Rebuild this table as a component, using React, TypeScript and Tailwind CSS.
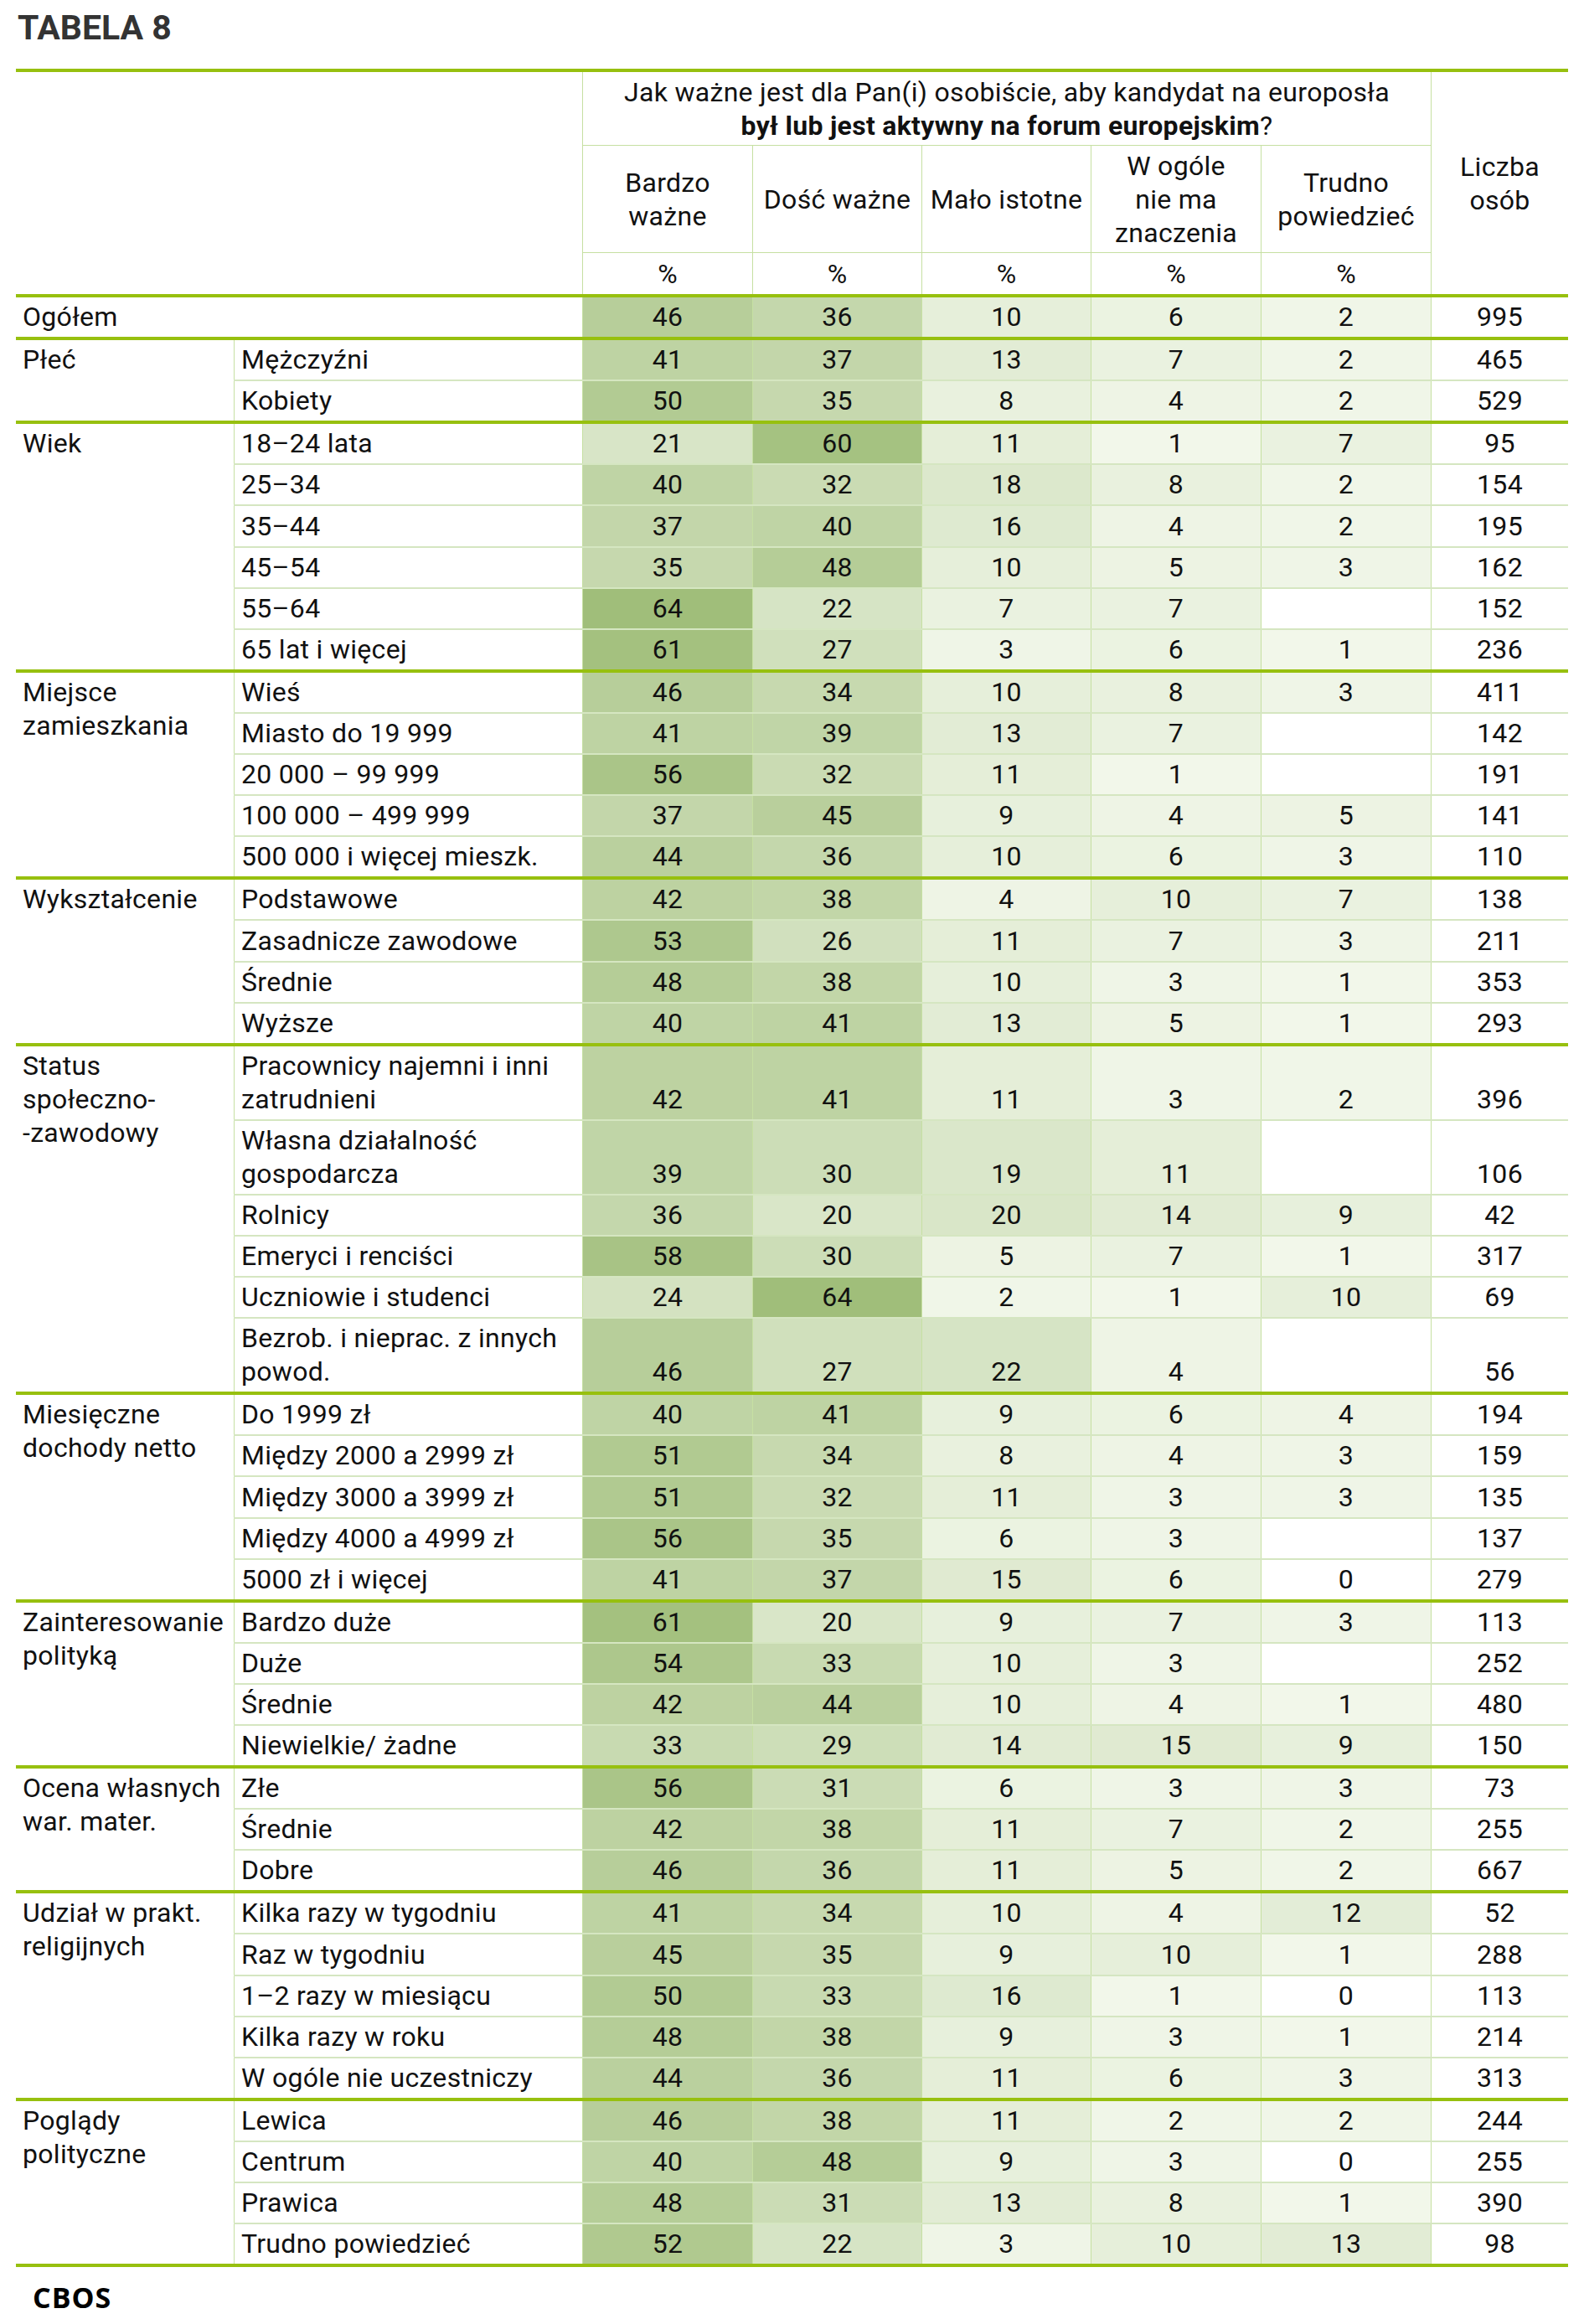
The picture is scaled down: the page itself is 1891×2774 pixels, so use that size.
type Row = { label: string; v: (number | null)[]; n: number };
type Group = { label: string; rows: Row[] };

const total: Row = { label: "Ogółem", v: [46, 36, 10, 6, 2], n: 995 };

const groups: Group[] = [
  {
    label: "Płeć",
    rows: [
      { label: "Mężczyźni", v: [41, 37, 13, 7, 2], n: 465 },
      { label: "Kobiety", v: [50, 35, 8, 4, 2], n: 529 },
    ],
  },
  {
    label: "Wiek",
    rows: [
      { label: "18–24 lata", v: [21, 60, 11, 1, 7], n: 95 },
      { label: "25–34", v: [40, 32, 18, 8, 2], n: 154 },
      { label: "35–44", v: [37, 40, 16, 4, 2], n: 195 },
      { label: "45–54", v: [35, 48, 10, 5, 3], n: 162 },
      { label: "55–64", v: [64, 22, 7, 7, null], n: 152 },
      { label: "65 lat i więcej", v: [61, 27, 3, 6, 1], n: 236 },
    ],
  },
  {
    label: "Miejsce\nzamieszkania",
    rows: [
      { label: "Wieś", v: [46, 34, 10, 8, 3], n: 411 },
      { label: "Miasto do 19 999", v: [41, 39, 13, 7, null], n: 142 },
      { label: "20 000 – 99 999", v: [56, 32, 11, 1, null], n: 191 },
      { label: "100 000 – 499 999", v: [37, 45, 9, 4, 5], n: 141 },
      { label: "500 000 i więcej mieszk.", v: [44, 36, 10, 6, 3], n: 110 },
    ],
  },
  {
    label: "Wykształcenie",
    rows: [
      { label: "Podstawowe", v: [42, 38, 4, 10, 7], n: 138 },
      { label: "Zasadnicze zawodowe", v: [53, 26, 11, 7, 3], n: 211 },
      { label: "Średnie", v: [48, 38, 10, 3, 1], n: 353 },
      { label: "Wyższe", v: [40, 41, 13, 5, 1], n: 293 },
    ],
  },
  {
    label: "Status\nspołeczno-\n-zawodowy",
    rows: [
      { label: "Pracownicy najemni i inni\nzatrudnieni", v: [42, 41, 11, 3, 2], n: 396 },
      { label: "Własna działalność\ngospodarcza", v: [39, 30, 19, 11, null], n: 106 },
      { label: "Rolnicy", v: [36, 20, 20, 14, 9], n: 42 },
      { label: "Emeryci i renciści", v: [58, 30, 5, 7, 1], n: 317 },
      { label: "Uczniowie i studenci", v: [24, 64, 2, 1, 10], n: 69 },
      { label: "Bezrob. i nieprac. z innych\npowod.", v: [46, 27, 22, 4, null], n: 56 },
    ],
  },
  {
    label: "Miesięczne\ndochody netto",
    rows: [
      { label: "Do 1999 zł", v: [40, 41, 9, 6, 4], n: 194 },
      { label: "Między 2000 a 2999 zł", v: [51, 34, 8, 4, 3], n: 159 },
      { label: "Między 3000 a 3999 zł", v: [51, 32, 11, 3, 3], n: 135 },
      { label: "Między 4000 a 4999 zł", v: [56, 35, 6, 3, null], n: 137 },
      { label: "5000 zł i więcej", v: [41, 37, 15, 6, 0], n: 279 },
    ],
  },
  {
    label: "Zainteresowanie\npolityką",
    rows: [
      { label: "Bardzo duże", v: [61, 20, 9, 7, 3], n: 113 },
      { label: "Duże", v: [54, 33, 10, 3, null], n: 252 },
      { label: "Średnie", v: [42, 44, 10, 4, 1], n: 480 },
      { label: "Niewielkie/ żadne", v: [33, 29, 14, 15, 9], n: 150 },
    ],
  },
  {
    label: "Ocena własnych\nwar. mater.",
    rows: [
      { label: "Złe", v: [56, 31, 6, 3, 3], n: 73 },
      { label: "Średnie", v: [42, 38, 11, 7, 2], n: 255 },
      { label: "Dobre", v: [46, 36, 11, 5, 2], n: 667 },
    ],
  },
  {
    label: "Udział w prakt.\nreligijnych",
    rows: [
      { label: "Kilka razy w tygodniu", v: [41, 34, 10, 4, 12], n: 52 },
      { label: "Raz w tygodniu", v: [45, 35, 9, 10, 1], n: 288 },
      { label: "1–2 razy w miesiącu", v: [50, 33, 16, 1, 0], n: 113 },
      { label: "Kilka razy w roku", v: [48, 38, 9, 3, 1], n: 214 },
      { label: "W ogóle nie uczestniczy", v: [44, 36, 11, 6, 3], n: 313 },
    ],
  },
  {
    label: "Poglądy\npolityczne",
    rows: [
      { label: "Lewica", v: [46, 38, 11, 2, 2], n: 244 },
      { label: "Centrum", v: [40, 48, 9, 3, 0], n: 255 },
      { label: "Prawica", v: [48, 31, 13, 8, 1], n: 390 },
      { label: "Trudno powiedzieć", v: [52, 22, 3, 10, 13], n: 98 },
    ],
  },
];

const COLS = ["w-[203px]", "w-[202px]", "w-[202px]", "w-[203px]", "w-[203px]"];
const HEADS = ["Bardzo\nważne", "Dość ważne", "Mało istotne", "W ogóle\nnie ma\nznaczenia", "Trudno\npowiedzieć"];

// heat-map shade, light green at 1% up to dark green at 64%
function heat(v: number | null) {
  if (!v) return "#ffffff";
  const t = Math.min(v, 64) / 64;
  const mix = (a: number, b: number) => Math.round(a + (b - a) * t);
  return `rgb(${mix(243, 160)}, ${mix(248, 190)}, ${mix(236, 122)})`;
}

function DataCells({ row, tall }: { row: Row; tall: boolean }) {
  const h = tall ? "h-[87.1px]" : "h-[47.1px]";
  return (
    <>
      {row.v.map((x, i) => (
        <div
          key={i}
          className={`${COLS[i]} ${h} shrink-0 border-l border-[#c6e0a2] flex items-end justify-center pb-[4px]`}
          style={{ backgroundColor: heat(x) }}
        >
          {x ?? ""}
        </div>
      ))}
      <div className={`w-[164px] ${h} shrink-0 border-l border-[#c6e0a2] flex items-end justify-center pb-[4px]`}>
        {row.n}
      </div>
    </>
  );
}

function Header() {
  return (
    <div className="flex border-t-4 border-[#97c00f]">
      <div className="w-[676px] shrink-0" />
      <div className="w-[1013px] shrink-0 flex flex-col">
        <div className="h-[88px] border-l border-b border-[#c6e0a2] flex flex-col items-center justify-center text-center">
          <div>Jak ważne jest dla Pan(i) osobiście, aby kandydat na europosła</div>
          <div>
            <span className="font-bold">był lub jest aktywny na forum europejskim</span>?
          </div>
        </div>
        <div className="h-[128px] flex border-b border-[#c6e0a2]">
          {HEADS.map((t, i) => (
            <div
              key={i}
              className={`${COLS[i]} shrink-0 border-l border-[#c6e0a2] flex items-center justify-center text-center whitespace-pre-line`}
            >
              {t}
            </div>
          ))}
        </div>
        <div className="h-[49px] flex">
          {COLS.map((c, i) => (
            <div key={i} className={`${c} shrink-0 border-l border-[#c6e0a2] flex items-center justify-center`}>
              %
            </div>
          ))}
        </div>
      </div>
      <div className="w-[164px] shrink-0 border-l border-[#c6e0a2] flex items-center justify-center text-center">
        Liczba
        <br />
        osób
      </div>
    </div>
  );
}

export default function App() {
  return (
    <div className="min-h-[2774px] w-[1891px] bg-white px-[19px] text-[32px] leading-[40px] tracking-[0.3px] text-[#111] font-['Roboto',sans-serif]">
      <div className="pt-[9px] pb-[25px] pl-[2px] text-[41px] leading-[48px] tracking-normal font-bold text-[#333]">
        TABELA 8
      </div>

      <div className="w-[1853px]">
        <Header />

        <div className="flex border-t-4 border-[#97c00f]">
          <div className="w-[676px] h-[47.1px] shrink-0 pl-[8px] flex items-end pb-[4px]">{total.label}</div>
          <DataCells row={total} tall={false} />
        </div>

        {groups.map((g) => (
          <div key={g.label} className="flex border-t-4 border-[#97c00f]">
            <div className="w-[260px] shrink-0 pl-[8px] pt-[3px] whitespace-pre-line">{g.label}</div>
            <div className="flex flex-col">
              {g.rows.map((r, i) => {
                const tall = r.label.includes("\n");
                return (
                  <div key={r.label + i} className={i > 0 ? "flex border-t-2 border-[#d5e6c1]" : "flex"}>
                    <div
                      className={`w-[416px] ${tall ? "h-[87.1px]" : "h-[47.1px]"} shrink-0 border-l border-[#c6e0a2] pl-[8px] pb-[4px] flex items-end whitespace-pre-line`}
                    >
                      {r.label}
                    </div>
                    <DataCells row={r} tall={tall} />
                  </div>
                );
              })}
            </div>
          </div>
        ))}

        <div className="h-[4px] bg-[#97c00f]" />
      </div>

      <div className="pt-[15px] pl-[20px] text-[34px] leading-[42px] tracking-[1px] font-bold text-black font-['Open_Sans',sans-serif]">
        CBOS
      </div>
    </div>
  );
}
